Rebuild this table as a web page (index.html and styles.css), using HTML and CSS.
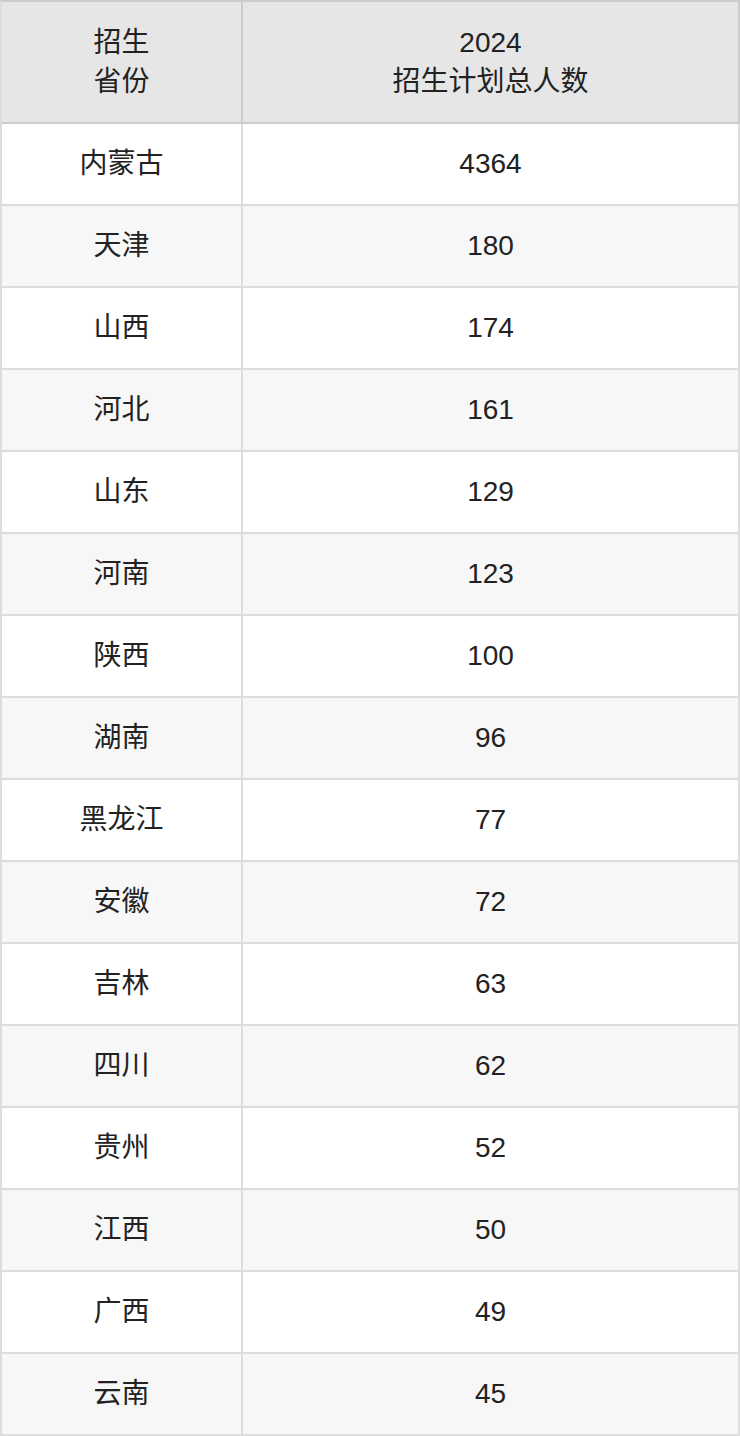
FILE: index.html
```html
<!DOCTYPE html>
<html lang="zh-CN">
<head>
<meta charset="utf-8">
<link rel="stylesheet" href="styles.css">
</head>
<body>
<table class="plan">
  <thead>
    <tr><th class="c1">招生<br>省份</th><th class="c2">2024<br>招生计划总人数</th></tr>
  </thead>
  <tbody>
    <tr><td>内蒙古</td><td>4364</td></tr>
    <tr><td>天津</td><td>180</td></tr>
    <tr><td>山西</td><td>174</td></tr>
    <tr><td>河北</td><td>161</td></tr>
    <tr><td>山东</td><td>129</td></tr>
    <tr><td>河南</td><td>123</td></tr>
    <tr><td>陕西</td><td>100</td></tr>
    <tr><td>湖南</td><td>96</td></tr>
    <tr><td>黑龙江</td><td>77</td></tr>
    <tr><td>安徽</td><td>72</td></tr>
    <tr><td>吉林</td><td>63</td></tr>
    <tr><td>四川</td><td>62</td></tr>
    <tr><td>贵州</td><td>52</td></tr>
    <tr><td>江西</td><td>50</td></tr>
    <tr><td>广西</td><td>49</td></tr>
    <tr><td>云南</td><td>45</td></tr>
  </tbody>
</table>
</body>
</html>
```
FILE: styles.css
```css
html, body {
  margin: 0;
  padding: 0;
  background: #ffffff;
}
.plan {
  width: 740px;
  border-collapse: separate;
  border-spacing: 0;
  table-layout: fixed;
  font-family: "Liberation Sans", "Noto Sans CJK SC", sans-serif;
  font-size: 28px;
  color: #222222;
  border-left: 2px solid #dddddd;
  border-top: 2px solid #cccccc;
}
.plan th, .plan td {
  text-align: center;
  vertical-align: middle;
  padding: 0;
  border-right: 2px solid #dddddd;
  border-bottom: 2px solid #dddddd;
}
.plan th {
  background: #e6e6e6;
  font-weight: normal;
  height: 120px;
  line-height: 39px;
  border-bottom-color: #cccccc;
  border-right-color: #cccccc;
}
.plan .c1 { width: 239px; }
.plan td {
  height: 80px;
  line-height: 32px;
}
.plan tbody tr:nth-child(even) td {
  background: #f7f7f7;
}
```
